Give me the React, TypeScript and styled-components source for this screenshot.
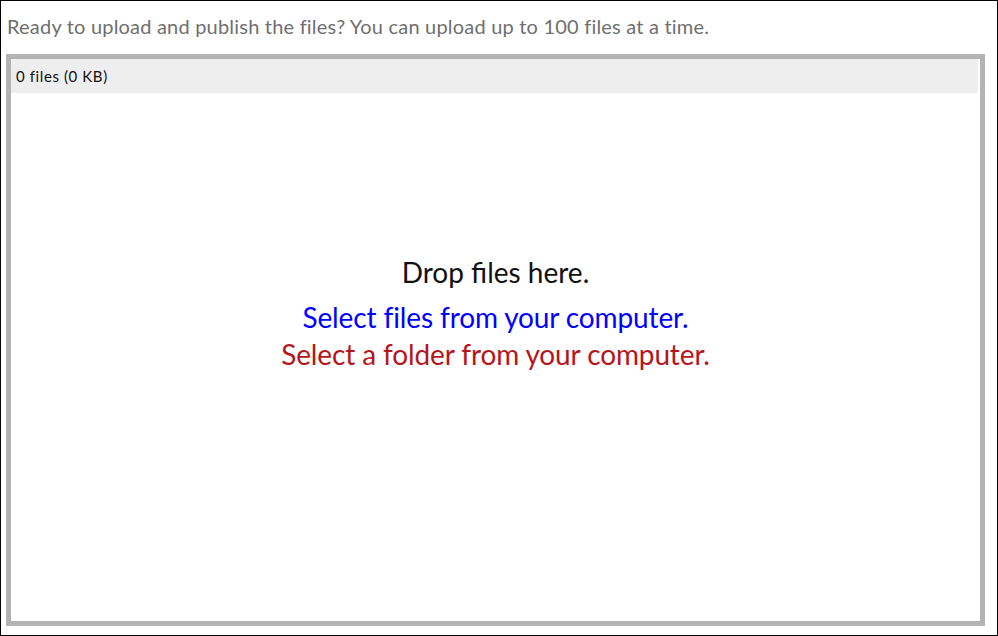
import React from "react";
import styled, { createGlobalStyle } from "styled-components";

const GlobalStyle = createGlobalStyle`
  html, body {
    margin: 0;
    padding: 0;
    background: #ffffff;
  }
  body {
    font-family: Lato, "Liberation Sans", sans-serif;
  }
`;

const Frame = styled.div`
  width: 998px;
  height: 636px;
  box-sizing: border-box;
  border: 1px solid #000000;
  padding: 13px 12px 0 5px;
  display: flex;
  flex-direction: column;
  gap: 16px;
  background: #ffffff;
`;

const Intro = styled.p`
  margin: 0 0 0 1px;
  font-size: 20px;
  line-height: 24px;
  letter-spacing: 0.2px;
  color: #6f6f6f;
`;

const DropBox = styled.div`
  height: 572px;
  box-sizing: border-box;
  border: 5px solid #b3b3b3;
  display: flex;
  flex-direction: column;
`;

const Header = styled.div`
  height: 34px;
  margin-right: 2px;
  padding-left: 5px;
  background: #eeeeee;
  display: flex;
  align-items: center;
  font-size: 15px;
  letter-spacing: 0.6px;
  color: #111111;
`;

const DropArea = styled.div`
  flex: 1;
  padding-top: 161px;
  display: flex;
  flex-direction: column;
  align-items: center;
`;

const Line = styled.div<{ tone: "plain" | "blue" | "red" }>`
  font-size: 28px;
  line-height: 37px;
  letter-spacing: ${(props) => (props.tone === "plain" ? "0" : "-0.12px")};
  color: ${(props) =>
    props.tone === "blue" ? "#0000ff" : props.tone === "red" ? "#b5161b" : "#111111"};
  margin-bottom: ${(props) => (props.tone === "plain" ? "8px" : "0")};
  cursor: ${(props) => (props.tone === "plain" ? "default" : "pointer")};
`;

const App = (): JSX.Element => {
  return (
    <>
      <GlobalStyle />
      <Frame>
        <Intro>
          Ready to upload and publish the files? You can upload up to 100 files at a time.
        </Intro>
        <DropBox>
          <Header>0 files (0 KB)</Header>
          <DropArea>
            <Line tone="plain">Drop files here.</Line>
            <Line tone="blue">Select files from your computer.</Line>
            <Line tone="red">Select a folder from your computer.</Line>
          </DropArea>
        </DropBox>
      </Frame>
    </>
  );
};

export default App;
